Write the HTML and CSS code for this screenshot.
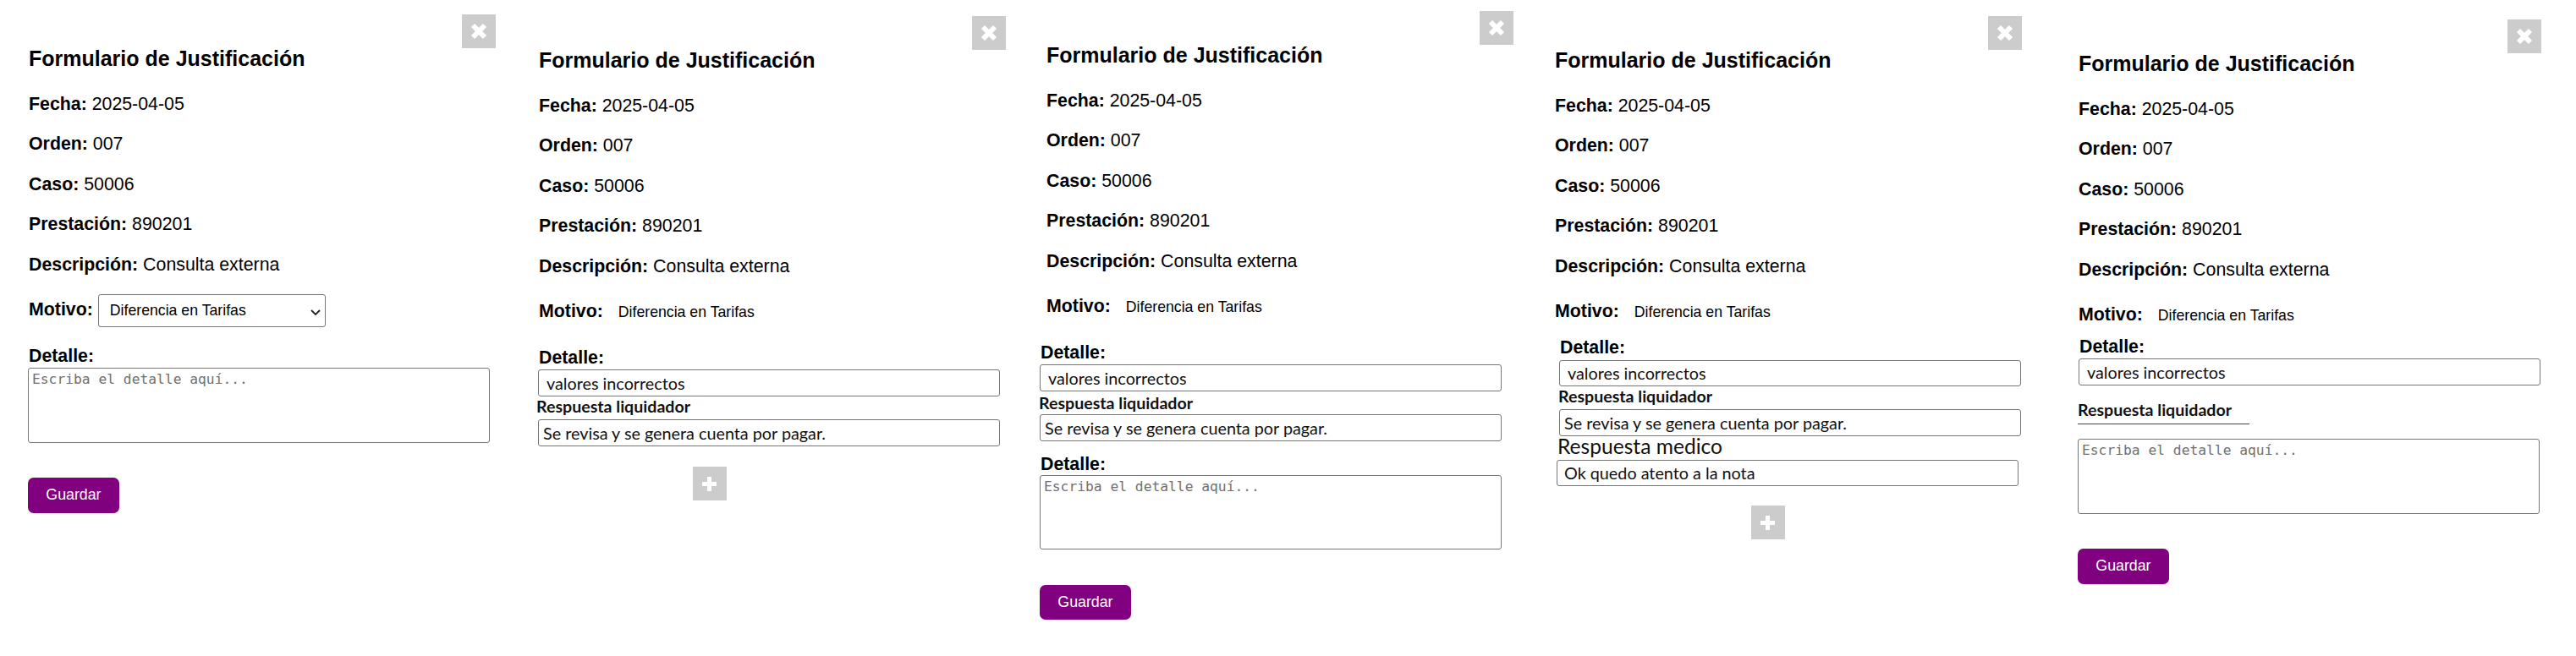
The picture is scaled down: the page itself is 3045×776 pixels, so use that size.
FILE: index.html
```html
<!DOCTYPE html>
<html lang="es">
<head>
<meta charset="utf-8">
<title>Formulario de Justificación</title>
<link rel="stylesheet" href="styles.css">
</head>
<body>
<main class="board">

  <!-- Panel 1 -->
  <section class="panel">
    <div class="card card--1">
      <button class="close" aria-label="Cerrar"><svg width="40" height="40" viewBox="0 0 40 40"><path d="M13 13 L27 27 M27 13 L13 27" stroke="#fff" stroke-width="6" fill="none"/></svg></button>
      <h3 class="title">Formulario de Justificación</h3>
      <div class="info">
        <p class="row"><b>Fecha:</b> 2025-04-05</p>
        <p class="row"><b>Orden:</b> 007</p>
        <p class="row"><b>Caso:</b> 50006</p>
        <p class="row"><b>Prestación:</b> 890201</p>
        <p class="row"><b>Descripción:</b> Consulta externa</p>
      </div>
      <div class="motivo">
        <b>Motivo:</b>
        <span class="select-wrap">
          <select class="select"><option>Diferencia en Tarifas</option></select>
          <svg class="chevron" viewBox="0 0 12 7"><path d="M1 1 L6 6 L11 1" stroke="#222" stroke-width="1.8" fill="none"/></svg>
        </span>
      </div>
      <div class="lower">
        <label class="label">Detalle:</label>
        <textarea class="textarea" placeholder="Escriba el detalle aquí..."></textarea>
        <button class="btn-save">Guardar</button>
      </div>
    </div>
  </section>

  <!-- Panel 2 -->
  <section class="panel">
    <div class="card card--2">
      <button class="close" aria-label="Cerrar"><svg width="40" height="40" viewBox="0 0 40 40"><path d="M13 13 L27 27 M27 13 L13 27" stroke="#fff" stroke-width="6" fill="none"/></svg></button>
      <h3 class="title">Formulario de Justificación</h3>
      <div class="info">
        <p class="row"><b>Fecha:</b> 2025-04-05</p>
        <p class="row"><b>Orden:</b> 007</p>
        <p class="row"><b>Caso:</b> 50006</p>
        <p class="row"><b>Prestación:</b> 890201</p>
        <p class="row"><b>Descripción:</b> Consulta externa</p>
      </div>
      <div class="motivo">
        <b>Motivo:</b>
        <span class="select-wrap">
          <select class="select select--bare"><option>Diferencia en Tarifas</option></select>
        </span>
      </div>
      <div class="lower">
        <label class="label">Detalle:</label>
        <input class="field field--a" type="text" value="valores incorrectos" readonly>
        <div class="resp">Respuesta liquidador</div>
        <input class="field field--b" type="text" value="Se revisa y se genera cuenta por pagar." readonly>
        <button class="btn-add" aria-label="Agregar"><svg width="40" height="40" viewBox="0 0 40 40"><path d="M11 20.5 H28 M19.5 12 V29" stroke="#fff" stroke-width="5" fill="none"/></svg></button>
      </div>
    </div>
  </section>

  <!-- Panel 3 -->
  <section class="panel">
    <div class="card card--3">
      <button class="close" aria-label="Cerrar"><svg width="40" height="40" viewBox="0 0 40 40"><path d="M13 13 L27 27 M27 13 L13 27" stroke="#fff" stroke-width="6" fill="none"/></svg></button>
      <h3 class="title">Formulario de Justificación</h3>
      <div class="info">
        <p class="row"><b>Fecha:</b> 2025-04-05</p>
        <p class="row"><b>Orden:</b> 007</p>
        <p class="row"><b>Caso:</b> 50006</p>
        <p class="row"><b>Prestación:</b> 890201</p>
        <p class="row"><b>Descripción:</b> Consulta externa</p>
      </div>
      <div class="motivo">
        <b>Motivo:</b>
        <span class="select-wrap">
          <select class="select select--bare"><option>Diferencia en Tarifas</option></select>
        </span>
      </div>
      <div class="lower">
        <label class="label">Detalle:</label>
        <input class="field field--a" type="text" value="valores incorrectos" readonly>
        <div class="resp">Respuesta liquidador</div>
        <input class="field field--b" type="text" value="Se revisa y se genera cuenta por pagar." readonly>
        <label class="label label--2">Detalle:</label>
        <textarea class="textarea" placeholder="Escriba el detalle aquí..."></textarea>
        <button class="btn-save">Guardar</button>
      </div>
    </div>
  </section>

  <!-- Panel 4 -->
  <section class="panel">
    <div class="card card--4">
      <button class="close" aria-label="Cerrar"><svg width="40" height="40" viewBox="0 0 40 40"><path d="M13 13 L27 27 M27 13 L13 27" stroke="#fff" stroke-width="6" fill="none"/></svg></button>
      <h3 class="title">Formulario de Justificación</h3>
      <div class="info">
        <p class="row"><b>Fecha:</b> 2025-04-05</p>
        <p class="row"><b>Orden:</b> 007</p>
        <p class="row"><b>Caso:</b> 50006</p>
        <p class="row"><b>Prestación:</b> 890201</p>
        <p class="row"><b>Descripción:</b> Consulta externa</p>
      </div>
      <div class="motivo">
        <b>Motivo:</b>
        <span class="select-wrap">
          <select class="select select--bare"><option>Diferencia en Tarifas</option></select>
        </span>
      </div>
      <div class="lower">
        <label class="label">Detalle:</label>
        <input class="field field--a" type="text" value="valores incorrectos" readonly>
        <div class="resp">Respuesta liquidador</div>
        <input class="field field--b" type="text" value="Se revisa y se genera cuenta por pagar." readonly>
        <div class="resp-medico">Respuesta medico</div>
        <input class="field field--c" type="text" value="Ok quedo atento a la nota" readonly>
        <button class="btn-add" aria-label="Agregar"><svg width="40" height="40" viewBox="0 0 40 40"><path d="M11 20.5 H28 M19.5 12 V29" stroke="#fff" stroke-width="5" fill="none"/></svg></button>
      </div>
    </div>
  </section>

  <!-- Panel 5 -->
  <section class="panel">
    <div class="card card--5">
      <button class="close" aria-label="Cerrar"><svg width="40" height="40" viewBox="0 0 40 40"><path d="M13 13 L27 27 M27 13 L13 27" stroke="#fff" stroke-width="6" fill="none"/></svg></button>
      <h3 class="title">Formulario de Justificación</h3>
      <div class="info">
        <p class="row"><b>Fecha:</b> 2025-04-05</p>
        <p class="row"><b>Orden:</b> 007</p>
        <p class="row"><b>Caso:</b> 50006</p>
        <p class="row"><b>Prestación:</b> 890201</p>
        <p class="row"><b>Descripción:</b> Consulta externa</p>
      </div>
      <div class="motivo">
        <b>Motivo:</b>
        <span class="select-wrap">
          <select class="select select--bare"><option>Diferencia en Tarifas</option></select>
        </span>
      </div>
      <div class="lower">
        <label class="label">Detalle:</label>
        <input class="field field--a" type="text" value="valores incorrectos" readonly>
        <div class="resp resp--line">Respuesta liquidador</div>
        <textarea class="textarea" placeholder="Escriba el detalle aquí..."></textarea>
        <button class="btn-save">Guardar</button>
      </div>
    </div>
  </section>

</main>
</body>
</html>
```

FILE: styles.css
```css
* { box-sizing: border-box; }

html, body {
  margin: 0;
  padding: 0;
  background: #fff;
}

body {
  width: 3045px;
  height: 776px;
  overflow: hidden;
  font-family: "Liberation Sans", Arial, sans-serif;
  color: #000;
}

.board {
  display: flex;
}

.panel {
  width: 609px;
  height: 776px;
  flex: none;
}

.card {
  position: relative;
  width: 552px;
  display: flex;
  flex-direction: column;
  align-items: flex-start;
}

.card--1 { margin: 17px 0 0 34px; }
.card--2 { margin: 19px 0 0 28px; }
.card--3 { margin: 13px 0 0 19px; }
.card--4 { margin: 19px 0 0 11px; }
.card--5 { margin: 23px 0 0 21px; width: 547px; }

/* close button (overlay in the card corner) */
.close {
  position: absolute;
  top: 0;
  right: 0;
  width: 40px;
  height: 40px;
  padding: 0;
  border: 0;
  background: #cccccc;
  display: flex;
  align-items: center;
  justify-content: center;
}

.close svg, .btn-add svg { display: block; }

.title {
  margin: 37.3px 0 0;
  font-size: 25px;
  line-height: 30px;
  font-weight: bold;
  white-space: nowrap;
}

.info {
  margin-top: 25.3px;
  display: flex;
  flex-direction: column;
  gap: 21.5px;
}

.row {
  margin: 0;
  font-size: 21.33px;
  line-height: 26px;
  white-space: nowrap;
}

.motivo {
  margin-top: 22.4px;
  height: 39px;
  display: flex;
  align-items: baseline;
  gap: 6px;
  font-size: 21.33px;
  line-height: 26px;
}

.select-wrap {
  position: relative;
  display: inline-block;
}

.select {
  -webkit-appearance: none;
  appearance: none;
  display: block;
  width: 269px;
  height: 39px;
  margin: 0;
  padding: 0 30px 0 13px;
  border: 1px solid #767676;
  border-radius: 3px;
  background: #fff;
  color: #000;
  font-family: "Liberation Sans", Arial, sans-serif;
  font-size: 17.7px;
}

.select--bare {
  border-color: transparent;
  padding-left: 11px;
}

.chevron {
  position: absolute;
  right: 6px;
  top: 18px;
  width: 12px;
  height: 7px;
  pointer-events: none;
}

.lower {
  display: flex;
  flex-direction: column;
  align-items: flex-start;
}

.label {
  display: block;
  margin-top: 20.6px;
  font-size: 21.33px;
  line-height: 26px;
  font-weight: bold;
}

.textarea {
  display: block;
  width: 546px;
  height: 89px;
  margin: 1.4px 0 0 -1px;
  padding: 3px 4px;
  border: 1px solid #767676;
  border-radius: 3px;
  resize: none;
  font-family: "DejaVu Sans Mono", "Liberation Mono", monospace;
  font-size: 16.3px;
  color: #000;
  background: #fff;
}

.textarea::placeholder {
  color: #707070;
}

.field {
  display: block;
  width: 546px;
  height: 32px;
  margin: 1.4px 0 0 -1px;
  padding: 0 0 0 9px;
  border: 1px solid #767676;
  border-radius: 3px;
  background: #fff;
  color: #111;
  font-family: Lato, "Open Sans", sans-serif;
  font-size: 19.8px;
  outline: none;
}

.field--b {
  margin-top: 2.7px;
  padding-left: 5px;
}

.field--c {
  padding-left: 8px;
}

.resp {
  margin: 0.3px 0 0 -3px;
  font-family: Lato, "Open Sans", sans-serif;
  font-weight: bold;
  font-size: 19.6px;
  line-height: 24px;
  color: #111;
}

.resp-medico {
  margin: 0.6px 0 0 -3px;
  font-family: Lato, "Open Sans", sans-serif;
  font-size: 24.6px;
  line-height: 22px;
  color: #111;
}

.btn-save {
  display: block;
  height: 42px;
  margin-top: 41px;
  margin-left: -1px;
  padding: 0 21.3px;
  border: 0;
  border-radius: 6.7px;
  background: #800080;
  color: #fff;
  font-family: "Liberation Sans", Arial, sans-serif;
  font-size: 17.8px;
}

.btn-add {
  width: 40px;
  height: 40px;
  padding: 0;
  border: 0;
  background: #cccccc;
  display: flex;
  align-items: center;
  justify-content: center;
}

/* panel 2 */
.card--2 .btn-add { margin: 24px 0 0 182px; }

/* panel 3 */
.card--3 .lower { margin-left: -7px; }
.card--3 .resp { margin-top: 2.3px; margin-left: -2px; }
.card--3 .field--b { margin-top: 0.7px; }
.card--3 .label--2 { margin-top: 13.6px; }
.card--3 .textarea { margin-top: 0.4px; height: 88px; }
.card--3 .btn-save { margin-top: 42px; height: 41px; }

/* panel 4 */
.card--4 .lower { margin-left: 6px; }
.card--4 .label { margin-top: 8.6px; }
.card--4 .field--a { margin-top: 2.4px; height: 31px; }
.card--4 .resp { margin-top: 0.3px; margin-left: -2px; }
.card--4 .field--b { margin-top: 2.7px; margin-left: -1px; }
.card--4 .field--c { margin-top: 5.4px; height: 31px; margin-left: -4px; }
.card--4 .btn-add { margin: 23px 0 0 226px; }

/* panel 5 */
.card--5 .lower { margin-left: 1px; }
.card--5 .label { margin-top: 3.6px; }
.card--5 .resp--line {
  width: 203px;
  margin-top: 17.3px;
  margin-left: -2px;
  padding-bottom: 3.7px;
  border-bottom: 1px solid #444;
}
.card--5 .textarea { margin-top: 17px; margin-left: -2px; }
.card--5 .btn-save { margin-top: 41px; margin-left: -2px; }
```
